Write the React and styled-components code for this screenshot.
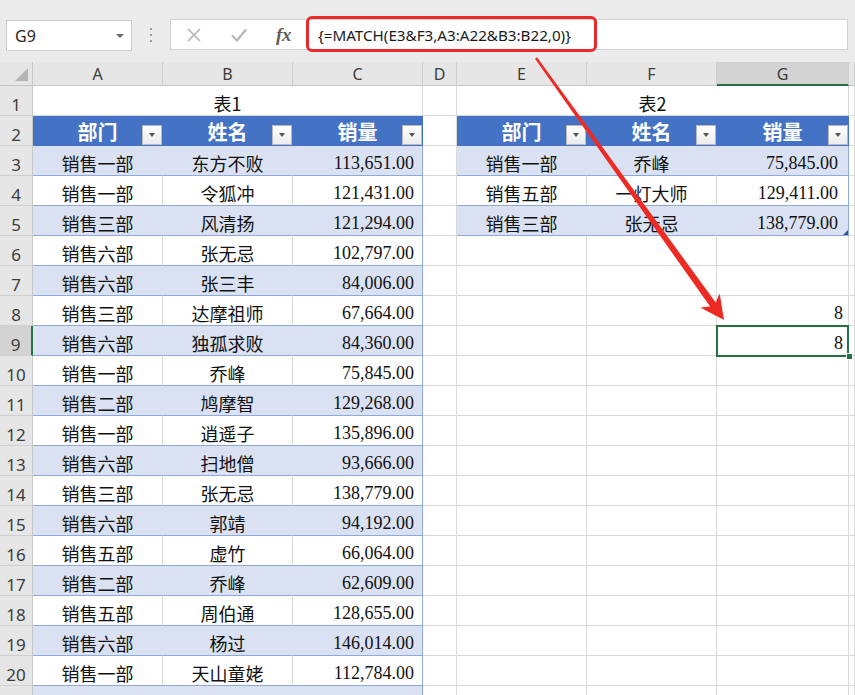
import React from 'react';
import styled, { createGlobalStyle, css } from 'styled-components';

const GlobalStyle = createGlobalStyle`
  html, body { margin: 0; padding: 0; background: #fff; overflow: hidden; }
  body { font-family: "Noto Sans", "Noto Sans CJK SC", sans-serif; }
`;

const GRID = '#d9d9d9';
const BLUE = '#4472C4';
const BAND = '#D9E1F2';
const TLINE = '#8EA9DB';
const GREEN = '#217346';

const Page = styled.div`
  position: relative;
  width: 855px;
  height: 695px;
  overflow: hidden;
  background: #fff;
`;

const Toolbar = styled.div`
  display: flex;
  align-items: flex-start;
  height: 62px;
  box-sizing: border-box;
  padding: 19px 7px 0 6px;
  background: #ebebeb;
`;

const NameBox = styled.div`
  box-sizing: border-box;
  width: 126px;
  height: 31px;
  margin-top: 1px;
  background: #fff;
  border: 1px solid #cdcdcd;
  display: flex;
  align-items: center;
  justify-content: space-between;
  padding: 0 7px 0 8px;
  font: 16px "Noto Sans", sans-serif;
  color: #262626;
`;

const Caret = styled.span`
  width: 0;
  height: 0;
  border-left: 4px solid transparent;
  border-right: 4px solid transparent;
  border-top: 4px solid #6d6d6d;
`;

const Grip = styled.div`
  width: 38px;
  height: 31px;
  display: flex;
  flex-direction: column;
  align-items: center;
  justify-content: center;
  gap: 4px;
`;

const Dot = styled.span`
  width: 2px;
  height: 2px;
  background: #9c9c9c;
`;

const FormulaBox = styled.div`
  position: relative;
  flex: 1;
  height: 31px;
  box-sizing: border-box;
  background: #fff;
  border: 1px solid #d3d3d3;
  display: flex;
  align-items: center;
`;

const IconSlot = styled.div`
  width: 45px;
  height: 29px;
  display: flex;
  align-items: center;
  justify-content: center;
  color: #b3b3b3;
`;

const Fx = styled.span`
  font: italic 700 19px "Liberation Serif", serif;
  color: #5f5f5f;
  letter-spacing: -0.5px;
`;

const FormulaText = styled.span`
  margin-left: 12px;
  font: 15.2px "Noto Sans", sans-serif;
  color: #1a1a1a;
  white-space: nowrap;
`;

const Highlight = styled.div`
  position: absolute;
  left: 135px;
  top: -4px;
  width: 291px;
  height: 36px;
  box-sizing: border-box;
  border: 3px solid #ea2a2a;
  border-radius: 6px;
  pointer-events: none;
`;

const Sheet = styled.div`
  display: grid;
  grid-template-columns: 33px 130px 130px 130px 34px 130px 130px 132px 1fr;
  grid-template-rows: 24px;
  grid-auto-rows: 30px;
`;

const HeadBase = css`
  box-sizing: border-box;
  background: ${p => (p.$sel ? '#d3d3d3' : '#e6e6e6')};
  color: #3c3c3c;
  font: 16px "Noto Sans", sans-serif;
  display: flex;
  justify-content: center;
`;

const Corner = styled.div`
  position: relative;
  box-sizing: border-box;
  background: #e6e6e6;
  border-right: 1px solid #c6c6c6;
  border-bottom: 1px solid #c6c6c6;
`;

const CornerTri = styled.span`
  position: absolute;
  right: 4px;
  bottom: 4px;
  width: 0;
  height: 0;
  border-left: 13px solid transparent;
  border-bottom: 13px solid #b5b5b5;
`;

const ColHead = styled.div`
  ${HeadBase};
  align-items: center;
  padding-top: 1px;
  border-right: 1px solid #cfcfcf;
  border-bottom: ${p => (p.$sel ? `2px solid ${GREEN}` : '1px solid #c6c6c6')};
`;

const RowHead = styled.div`
  ${HeadBase};
  align-items: center;
  padding-top: 7px;
  font-size: 17px;
  border-right: ${p => (p.$sel ? `2px solid ${GREEN}` : '1px solid #c6c6c6')};
  border-bottom: 1px solid #cfcfcf;
`;

const kinds = {
  plain: { bg: '#fff', right: GRID, bottom: GRID },
  title: { bg: '#fff', right: GRID, bottom: GRID },
  head: { bg: BLUE, right: BLUE, bottom: BLUE },
  band: { bg: BAND, right: BAND, bottom: TLINE },
  white: { bg: '#fff', right: GRID, bottom: TLINE },
};

const Cell = styled.div`
  position: relative;
  box-sizing: border-box;
  min-width: 0;
  grid-column: span ${p => p.$span || 1};
  background: ${p => kinds[p.$kind].bg};
  border-right: 1px solid ${p => (p.$edge && p.$kind !== 'head' ? TLINE : kinds[p.$kind].right)};
  border-bottom: 1px solid ${p => kinds[p.$kind].bottom};
  display: flex;
  align-items: center;
  justify-content: ${p => (p.$num ? 'flex-end' : 'center')};
  padding: ${p => (p.$kind === 'head' ? '3px 0 0 0' : '5px 0 0 0')};
  padding-right: ${p => (p.$num ? p.$pad || 8 : 0)}px;
  white-space: nowrap;
  overflow: visible;
  color: ${p => (p.$kind === 'head' ? '#fff' : '#111')};
  font-family: ${p => (p.$num ? '"Liberation Serif", serif' : '"Noto Sans CJK SC", sans-serif')};
  font-size: ${p => (p.$kind === 'head' ? 20 : 18)}px;
  font-weight: ${p => (p.$kind === 'head' ? 700 : 400)};
  line-height: 1;
  ${p =>
    p.$selected &&
    css`
      &::after {
        content: '';
        position: absolute;
        left: -1px;
        top: -1px;
        width: 133px;
        height: 32px;
        box-sizing: border-box;
        border: 2px solid ${GREEN};
        z-index: 3;
      }
    `}
`;

const FillHandle = styled.span`
  position: absolute;
  right: -5px;
  bottom: -5px;
  width: 7px;
  height: 7px;
  box-sizing: border-box;
  background: ${GREEN};
  border: 1px solid #fff;
  z-index: 4;
`;

const FilterBtn = styled.span`
  position: absolute;
  right: 0;
  bottom: 0;
  width: 20px;
  height: 20px;
  box-sizing: border-box;
  background: linear-gradient(#ffffff, #ececec);
  border: 1px solid #b9b9b9;
  display: flex;
  align-items: center;
  justify-content: center;
  &::before {
    content: '';
    width: 0;
    height: 0;
    border-left: 3.5px solid transparent;
    border-right: 3.5px solid transparent;
    border-top: 4px solid #555;
  }
`;

const ResizeTri = styled.span`
  position: absolute;
  right: 0;
  bottom: 0;
  width: 0;
  height: 0;
  border-left: 5px solid transparent;
  border-bottom: 5px solid #2f5597;
`;

const ArrowLayer = styled.svg`
  position: absolute;
  left: 0;
  top: 0;
  pointer-events: none;
  z-index: 10;
`;

const table1 = [
  ['销售一部', '东方不败', '113,651.00'],
  ['销售一部', '令狐冲', '121,431.00'],
  ['销售三部', '风清扬', '121,294.00'],
  ['销售六部', '张无忌', '102,797.00'],
  ['销售六部', '张三丰', '84,006.00'],
  ['销售三部', '达摩祖师', '67,664.00'],
  ['销售六部', '独孤求败', '84,360.00'],
  ['销售一部', '乔峰', '75,845.00'],
  ['销售二部', '鸠摩智', '129,268.00'],
  ['销售一部', '逍遥子', '135,896.00'],
  ['销售六部', '扫地僧', '93,666.00'],
  ['销售三部', '张无忌', '138,779.00'],
  ['销售六部', '郭靖', '94,192.00'],
  ['销售五部', '虚竹', '66,064.00'],
  ['销售二部', '乔峰', '62,609.00'],
  ['销售五部', '周伯通', '128,655.00'],
  ['销售六部', '杨过', '146,014.00'],
  ['销售一部', '天山童姥', '112,784.00'],
  ['销售六部', '段誉', '103,552.00'],
];

const table2 = [
  ['销售一部', '乔峰', '75,845.00'],
  ['销售五部', '一灯大师', '129,411.00'],
  ['销售三部', '张无忌', '138,779.00'],
];

const COLS = ['A', 'B', 'C', 'D', 'E', 'F', 'G', ''];

function XIcon() {
  return (
    <svg width="16" height="16" viewBox="0 0 16 16">
      <path d="M2 2 L14 14 M14 2 L2 14" stroke="#b3b3b3" strokeWidth="1.6" fill="none" />
    </svg>
  );
}

function CheckIcon() {
  return (
    <svg width="18" height="16" viewBox="0 0 18 16">
      <path d="M2 8.5 L7 13.5 L16 2.5" stroke="#b3b3b3" strokeWidth="2" fill="none" />
    </svg>
  );
}

function TableRowCells({ row, data }) {
  const kind = row % 2 === 1 ? 'band' : 'white';
  return (
    <>
      <Cell $kind={kind}>{data[0]}</Cell>
      <Cell $kind={kind}>{data[1]}</Cell>
      <Cell $kind={kind} $num $edge>
        {data[2]}
      </Cell>
    </>
  );
}

function HeaderCells() {
  return ['部门', '姓名', '销量'].map((t, i) => (
    <Cell key={t} $kind="head" $edge={i === 2}>
      {t}
      <FilterBtn />
    </Cell>
  ));
}

function Row({ r }) {
  const cells = [];
  if (r === 1) {
    cells.push(<Cell key="t1" $kind="title" $span={3}>表1</Cell>);
    cells.push(<Cell key="d" $kind="plain" />);
    cells.push(<Cell key="t2" $kind="title" $span={3}>表2</Cell>);
  } else if (r === 2) {
    cells.push(<HeaderCells key="h1" />);
    cells.push(<Cell key="d" $kind="plain" />);
    cells.push(<HeaderCells key="h2" />);
  } else {
    cells.push(<TableRowCells key="t1" row={r} data={table1[r - 3]} />);
    cells.push(<Cell key="d" $kind="plain" />);
    if (r <= 5) {
      const kind = r % 2 === 1 ? 'band' : 'white';
      const d = table2[r - 3];
      cells.push(<Cell key="e" $kind={kind}>{d[0]}</Cell>);
      cells.push(<Cell key="f" $kind={kind}>{d[1]}</Cell>);
      cells.push(
        <Cell key="g" $kind={kind} $num $edge $pad={10}>
          {d[2]}
          {r === 5 && <ResizeTri />}
        </Cell>
      );
    } else {
      cells.push(<Cell key="e" $kind="plain" />);
      cells.push(<Cell key="f" $kind="plain" />);
      cells.push(
        <Cell key="g" $kind="plain" $num={r === 8 || r === 9} $pad={5} $selected={r === 9}>
          {r === 8 || r === 9 ? '8' : ''}
          {r === 9 && <FillHandle />}
        </Cell>
      );
    }
  }
  cells.push(<Cell key="h" $kind="plain" />);
  return (
    <>
      <RowHead $sel={r === 9}>{r}</RowHead>
      {cells}
    </>
  );
}

export default function App() {
  const rows = Array.from({ length: 20 }, (_, i) => i + 1).concat([21]);
  return (
    <Page>
      <GlobalStyle />
      <Toolbar>
        <NameBox>
          G9
          <Caret />
        </NameBox>
        <Grip>
          <Dot />
          <Dot />
          <Dot />
        </Grip>
        <FormulaBox>
          <IconSlot>
            <XIcon />
          </IconSlot>
          <IconSlot>
            <CheckIcon />
          </IconSlot>
          <IconSlot>
            <Fx>fx</Fx>
          </IconSlot>
          <FormulaText>{'{=MATCH(E3&F3,A3:A22&B3:B22,0)}'}</FormulaText>
          <Highlight />
        </FormulaBox>
      </Toolbar>
      <Sheet>
        <Corner>
          <CornerTri />
        </Corner>
        {COLS.map((c, i) => (
          <ColHead key={i} $sel={c === 'G'}>
            {c}
          </ColHead>
        ))}
        {rows.map(r => (
          <Row key={r} r={r} />
        ))}
      </Sheet>
      <ArrowLayer width="855" height="695" viewBox="0 0 855 695">
        <polygon
          points="537,57.2 715.7,302.6 719.7,293.5 724,320 700.3,307.5 710.1,306.6 535,58.8"
          fill="#ee2a24"
        />
      </ArrowLayer>
    </Page>
  );
}
